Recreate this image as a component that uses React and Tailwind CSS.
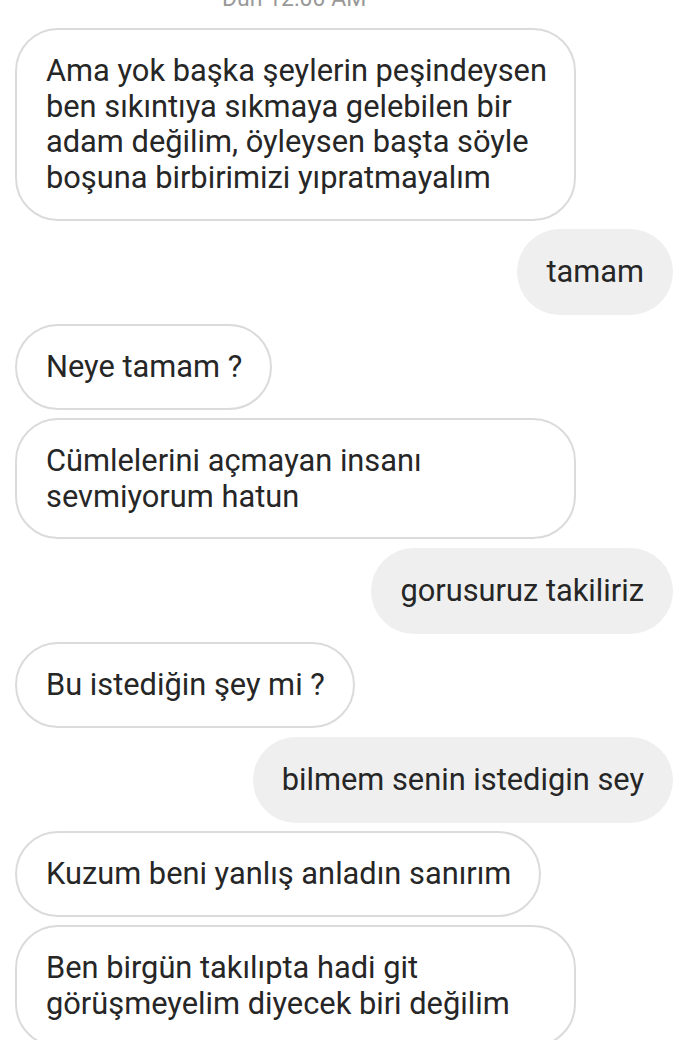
import React from "react";

const font = { fontFamily: "Roboto, 'Noto Sans', sans-serif" };

function In({ children, wide }) {
  return (
    <div className="flex justify-start pl-[15px]">
      <div
        className={`border-2 border-[#dbdbdb] bg-white rounded-[43px] pl-[29px] pr-[28px] py-[23px] text-[#262626] text-[30.8px] leading-[35.7px] whitespace-nowrap ${wide ? "w-[561px]" : ""}`}
      >
        {children}
      </div>
    </div>
  );
}

function Out({ children }) {
  return (
    <div className="flex justify-end pr-[17px]">
      <div className="bg-[#efefef] rounded-[43px] px-[29px] py-[25px] text-[#262626] text-[30.8px] leading-[36px] whitespace-nowrap">
        {children}
      </div>
    </div>
  );
}

export default function App() {
  return (
    <div className="w-[690px] h-[1040px] overflow-hidden bg-white" style={font}>
      <div className="h-[28px] relative overflow-hidden">
        <div className="absolute left-[222px] top-[-13px] text-[23px] leading-[24px] text-[#999999]">
          Dün 12:00 AM
        </div>
      </div>
      <div className="flex flex-col gap-[8.5px]">
        <In wide>
          Ama yok başka şeylerin peşindeysen
          <br />
          ben sıkıntıya sıkmaya gelebilen bir
          <br />
          adam değilim, öyleysen başta söyle
          <br />
          boşuna birbirimizi yıpratmayalım
        </In>
        <Out>tamam</Out>
        <In>Neye tamam ?</In>
        <In wide>
          Cümlelerini açmayan insanı
          <br />
          sevmiyorum hatun
        </In>
        <Out>gorusuruz takiliriz</Out>
        <In>Bu istediğin şey mi ?</In>
        <Out>bilmem senin istedigin sey</Out>
        <In>Kuzum beni yanlış anladın sanırım</In>
        <In wide>
          Ben birgün takılıpta hadi git
          <br />
          görüşmeyelim diyecek biri değilim
        </In>
      </div>
    </div>
  );
}
